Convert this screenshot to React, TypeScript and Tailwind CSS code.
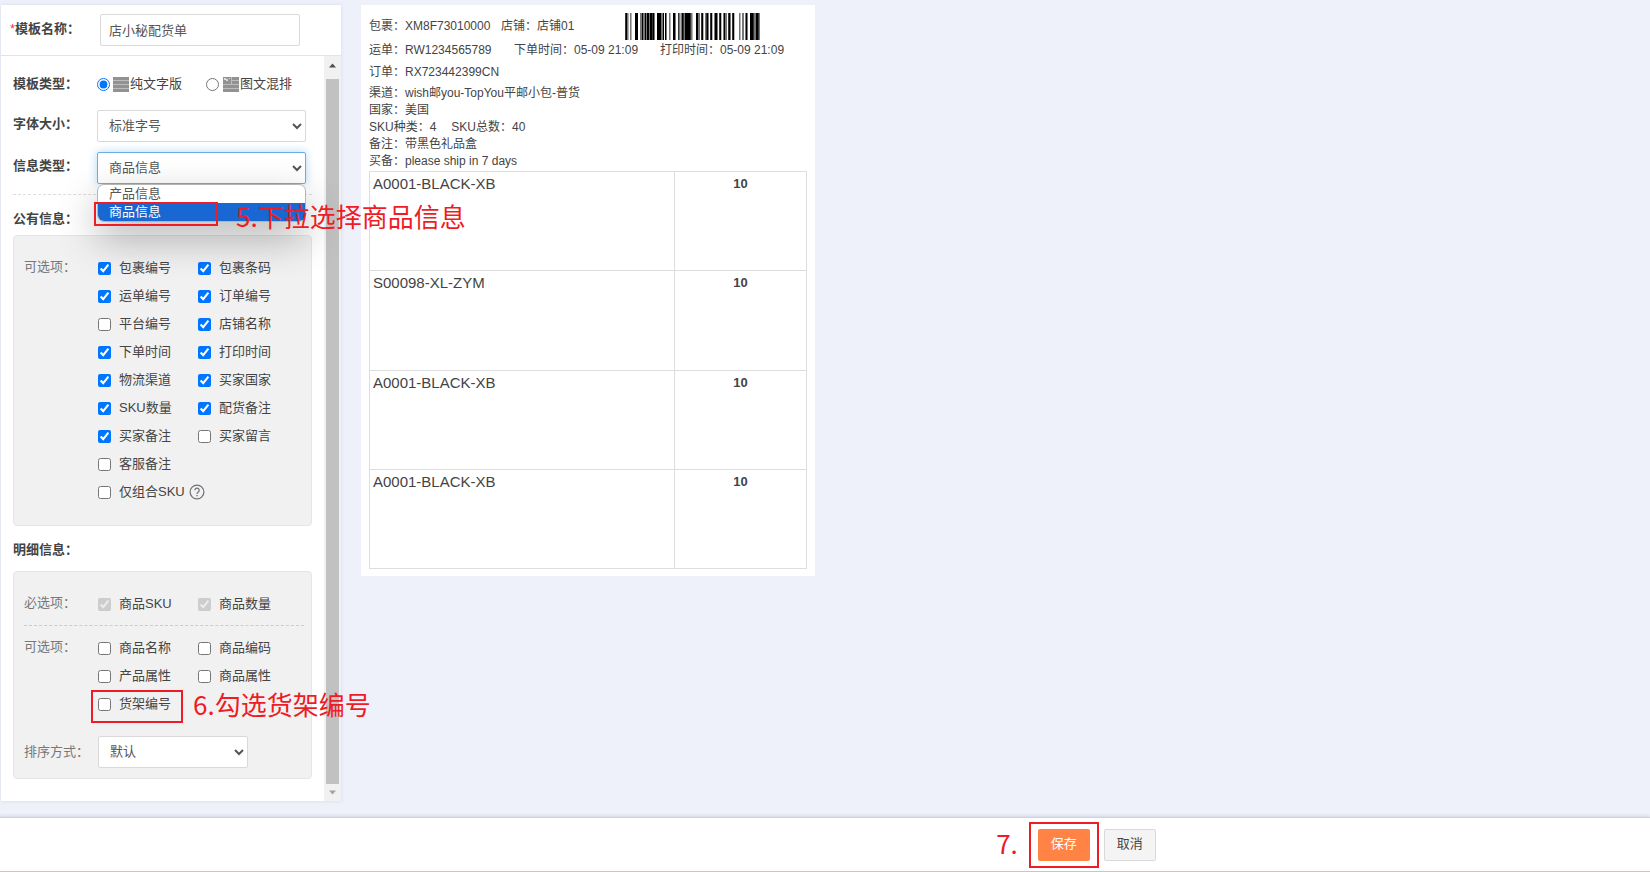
import React, { useState } from 'react';

interface Option {
  id: string;
  label: string;
  checked?: boolean;
  help?: boolean;
}

const publicOptions: Option[] = [
  { id: 'package-no', label: '包裹编号', checked: true },
  { id: 'package-barcode', label: '包裹条码', checked: true },
  { id: 'tracking-no', label: '运单编号', checked: true },
  { id: 'order-no', label: '订单编号', checked: true },
  { id: 'platform-no', label: '平台编号' },
  { id: 'shop-name', label: '店铺名称', checked: true },
  { id: 'order-time', label: '下单时间', checked: true },
  { id: 'print-time', label: '打印时间', checked: true },
  { id: 'channel', label: '物流渠道', checked: true },
  { id: 'country', label: '买家国家', checked: true },
  { id: 'sku-count', label: 'SKU数量', checked: true },
  { id: 'picking-note', label: '配货备注', checked: true },
  { id: 'buyer-note', label: '买家备注', checked: true },
  { id: 'buyer-message', label: '买家留言' },
];

const requiredOptions: Option[] = [
  { id: 'goods-sku', label: '商品SKU', checked: true },
  { id: 'goods-qty', label: '商品数量', checked: true },
];

const detailOptions: Option[] = [
  { id: 'goods-name', label: '商品名称' },
  { id: 'goods-code', label: '商品编码' },
  { id: 'product-attr', label: '产品属性' },
  { id: 'goods-attr', label: '商品属性' },
];

const items = [
  { sku: 'A0001-BLACK-XB', qty: 10 },
  { sku: 'S00098-XL-ZYM', qty: 10 },
  { sku: 'A0001-BLACK-XB', qty: 10 },
  { sku: 'A0001-BLACK-XB', qty: 10 },
];

// one character per column: k black, d dark, g grey, l light, . blank
const BARCODE =
  'dkgl.gl...kkk..ggkggkgkkgkkdkg..kkkggk.kg..gl..kkg..dglgkdgkkkkkdgl...kkgg.dkl.gdkg.dkl.gkkg.dkl.gkg.dkg.dkl....gl.gg.gkg..kkkdggkkdg';

const BAR_COLORS: Record<string, string> = { k: '#000', d: '#333', g: '#777', l: '#b5b5b5' };

const Barcode = () => (
  <svg className="h-[27px] w-[135px]" viewBox={`0 0 ${BARCODE.length} 27`} preserveAspectRatio="none" shapeRendering="crispEdges" role="img" aria-label="barcode">
    {BARCODE.split('').map((c, i) =>
      c === '.' ? null : <rect key={i} x={i} y="0" width="1" height="27" fill={BAR_COLORS[c]} />
    )}
  </svg>
);

const TextIcon = () => (
  <svg className="mr-px h-[15px] w-4 shrink-0" viewBox="0 0 16 15" shapeRendering="crispEdges">
    <path d="M0 0h16v15H0z" fill="#bdbdbd" />
    <path d="M0 0h16v3H0zM0 4h16v3H0zM0 8h16v3H0zM0 12h16v3H0z" fill="#929292" />
  </svg>
);

const ImageTextIcon = () => (
  <svg className="mr-px h-[15px] w-4 shrink-0" viewBox="0 0 16 15" shapeRendering="crispEdges">
    <path d="M0 0h16v15H0z" fill="#bdbdbd" />
    <path d="M0 0h8v7H0zM9 0h7v3H9zM9 4h7v3H9zM0 8h16v3H0zM0 12h16v3H0z" fill="#929292" />
    <path d="M1 1h2v1h2v2H3V3H1zM6 1h1v1H6z" fill="#dcdcdc" />
  </svg>
);

const HelpIcon = () => (
  <svg className="ml-1 h-4 w-4" viewBox="0 0 16 16" fill="none" stroke="#6b6f76">
    <circle cx="8" cy="8" r="6.9" strokeWidth="1.2" />
    <path d="M5.8 6.3a2.2 2.2 0 1 1 3.3 1.9c-.7.4-1.1.8-1.1 1.7" strokeWidth="1.2" />
    <path d="M8 11v1.3" strokeWidth="1.3" />
  </svg>
);

const Check = ({ option, disabled }: { option: Option; disabled?: boolean }) => (
  <label className="flex h-7 items-center whitespace-nowrap">
    <input type="checkbox" defaultChecked={option.checked} disabled={disabled} className="mr-2 h-[13px] w-[13px]" />
    {option.label}
    {option.help && <HelpIcon />}
  </label>
);

const selectClass = 'h-8 rounded-[2px] border bg-white px-[7px] pb-px text-[13px] text-[#555] outline-none';
const noteClass = "text-[26px] leading-8 whitespace-nowrap text-[#ee1c25] font-['Noto_Sans_CJK_SC',sans-serif]";

export default function App() {
  const [name, setName] = useState('店小秘配货单');

  return (
    <div className="flex min-h-screen flex-col bg-[#eef1fa] font-['Liberation_Sans','Noto_Sans_CJK_SC',sans-serif] text-[13px] leading-5 text-[#444]">
      <main className="flex flex-1 items-start gap-5 pt-[5px] pb-4 pl-px">
        {/* Settings panel */}
        <section className="w-[340px] shrink-0 bg-white shadow-[0_0_4px_rgba(120,130,160,0.2)]">
          <div className="flex h-[51px] items-center border-b border-[#e3e3e3] pl-[9px]">
            <label htmlFor="name" className="w-[90px] pb-0.5 font-bold">
              <span className="font-normal text-[#f33]">*</span>模板名称：
            </label>
            <input
              id="name"
              value={name}
              onChange={(e) => setName(e.target.value)}
              className="h-8 w-[200px] rounded-[2px] border border-[#d9d9d9] bg-white px-2 pb-px text-[#555] outline-none"
            />
          </div>

          <div className="flex">
            <div className="flex-1 px-3 pt-3 pb-[22px]">
              <div className="flex h-8 items-center">
                <span className="w-[84px] font-bold">模板类型：</span>
                <label className="mr-6 flex items-center">
                  <input type="radio" name="layout" defaultChecked className="mr-[3px] h-[13px] w-[13px]" />
                  <TextIcon />
                  纯文字版
                </label>
                <label className="flex items-center">
                  <input type="radio" name="layout" className="mr-1 h-[13px] w-[13px]" />
                  <ImageTextIcon />
                  图文混排
                </label>
              </div>

              <div className="mt-2.5 flex items-center">
                <label htmlFor="font-size" className="w-[84px] pb-1 font-bold">字体大小：</label>
                <select id="font-size" className={`${selectClass} w-[209px] border-[#d9d9d9]`}>
                  <option>标准字号</option>
                </select>
              </div>

              <div className="relative mt-2.5 flex items-center">
                <label htmlFor="info-type" className="w-[84px] pb-1 font-bold">信息类型：</label>
                <select
                  id="info-type"
                  defaultValue="goods"
                  className={`${selectClass} w-[209px] border-[#66afe9] shadow-[0_0_8px_rgba(102,175,233,0.5)]`}
                >
                  <option value="product">产品信息</option>
                  <option value="goods">商品信息</option>
                </select>
                {/* Opened list */}
                <div className="absolute top-full left-[84px] z-10 w-[209px] rounded-[7px] shadow-[0_16px_40px_rgba(0,0,0,0.3)]">
                  <ul className="overflow-hidden rounded-[7px] border border-[#b5b5b5] bg-white leading-[18px] text-[#555]">
                    <li className="px-[11px]">产品信息</li>
                    <li className="bg-[#1967d2] px-[11px] text-white">商品信息</li>
                  </ul>
                  <div className="absolute -bottom-1 -left-[3px] h-6 w-[124px] border-2 border-[#ee1c25]" />
                  <p className={`absolute top-4 left-[139px] ${noteClass}`}>5.下拉选择商品信息</p>
                </div>
              </div>

              <div className="mt-2.5 border-t border-dashed border-[#ddd]" />

              <h2 className="mt-3.5 mb-1.5 font-bold">公有信息：</h2>
              <div className="flex rounded-[4px] border border-[#e5e5e5] bg-[#f1f1f1] px-2.5 pt-[18px] pb-[19px]">
                <span className="mt-[3px] w-[74px] text-[#777]">可选项：</span>
                <div className="grid grid-cols-[100px_100px]">
                  {publicOptions.map((o) => (
                    <Check key={o.id} option={o} />
                  ))}
                  <div className="col-span-2">
                    <Check option={{ id: 'cs-note', label: '客服备注' }} />
                    <Check option={{ id: 'combo-sku', label: '仅组合SKU', help: true }} />
                  </div>
                </div>
              </div>

              <h2 className="mt-3.5 mb-[11px] font-bold">明细信息：</h2>
              <div className="rounded-[4px] border border-[#e5e5e5] bg-[#f1f1f1] pt-[18px] pr-[7px] pb-2.5 pl-2.5">
                <div className="flex border-b border-dashed border-[#ccc] pb-[7px]">
                  <span className="mt-[3px] w-[74px] text-[#777]">必选项：</span>
                  <div className="grid grid-cols-[100px_100px]">
                    {requiredOptions.map((o) => (
                      <Check key={o.id} option={o} disabled />
                    ))}
                  </div>
                </div>
                <div className="mt-2 flex">
                  <span className="mt-[3px] w-[74px] text-[#777]">可选项：</span>
                  <div className="grid grid-cols-[100px_100px]">
                    {detailOptions.map((o) => (
                      <Check key={o.id} option={o} />
                    ))}
                    <div className="relative">
                      <Check option={{ id: 'shelf-no', label: '货架编号' }} />
                      <div className="absolute top-0 -left-[7px] h-[33px] w-[92px] border-2 border-[#ee1c25]" />
                      <p className={`absolute -top-0.5 left-[95px] ${noteClass}`}>6.勾选货架编号</p>
                    </div>
                  </div>
                </div>
                <div className="mt-[18px] flex items-center">
                  <label htmlFor="sort" className="w-[74px] text-[#777]">排序方式：</label>
                  <select id="sort" className={`${selectClass} w-[150px] border-[#d9d9d9]`}>
                    <option>默认</option>
                  </select>
                </div>
              </div>
            </div>

            {/* Scrollbar */}
            <div className="flex w-[17px] flex-col items-center justify-between bg-[#f1f1f1]">
              <svg className="h-[23px] w-[17px]" viewBox="0 0 17 23">
                <path d="M8.5 7.5l3.5 4H5z" fill="#505050" />
              </svg>
              <div className="w-[13px] flex-1 bg-[#c1c1c1]" />
              <svg className="h-[17px] w-[17px]" viewBox="0 0 17 17">
                <path d="M8.5 10.5l3.5-4H5z" fill="#a3a3a3" />
              </svg>
            </div>
          </div>
        </section>

        {/* Print preview */}
        <section className="w-[454px] shrink-0 bg-white px-2 pt-[7px] pb-[7px] text-xs leading-[17px]">
          <div className="flex h-7 items-center">
            <span className="w-[132px]">包裹：XM8F73010000</span>
            <span className="w-[124px]">店铺：店铺01</span>
            <Barcode />
          </div>
          <div className="flex h-5 items-center">
            <span className="w-[145px]">运单：RW1234565789</span>
            <span className="w-[146px]">下单时间：05-09 21:09</span>
            <span>打印时间：05-09 21:09</span>
          </div>
          <p className="py-1">订单：RX723442399CN</p>
          <p>渠道：wish邮you-TopYou平邮小包-普货</p>
          <p>国家：美国</p>
          <p className="flex gap-[15px]">
            <span>SKU种类：4</span>
            <span>SKU总数：40</span>
          </p>
          <p>备注：带黑色礼品盒</p>
          <p>买备：please ship in 7 days</p>
          <table className="mt-px h-[398px] w-full table-fixed border-collapse">
            <tbody>
              {items.map((item, i) => (
                <tr key={i} className="h-[99px] align-top">
                  <td className="w-[305px] border border-[#ddd] px-[3px] pt-[3px] text-[15px]">{item.sku}</td>
                  <td className="border border-[#ddd] pt-[3px] text-center text-[13px] font-bold">{item.qty}</td>
                </tr>
              ))}
            </tbody>
          </table>
        </section>
      </main>

      <footer className="flex h-14 items-center justify-center border-t border-b-2 border-t-[#ccd3de] border-b-[#cfc4c4] bg-white pl-[502px] shadow-[0_-1px_3px_rgba(120,130,160,0.25)]">
        <span className={`mr-[11px] pb-1 ${noteClass}`}>7.</span>
        <div className="mr-[5px] border-2 border-[#ee1c25] px-[7px] py-[5px]">
          <button className="h-8 w-[52px] rounded-[2px] bg-[#ff8345] pb-0.5 text-white">保存</button>
        </div>
        <button className="h-8 w-[52px] rounded-[2px] border border-[#d9d9d9] bg-[#f4f4f4] pb-0.5">取消</button>
      </footer>
    </div>
  );
}
